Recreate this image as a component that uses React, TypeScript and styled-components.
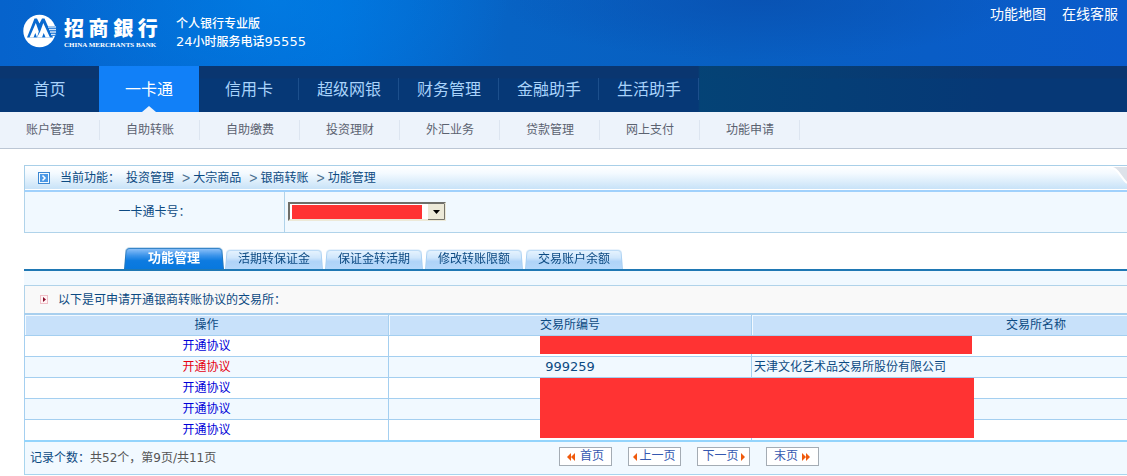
import React from "react";
import styled, { createGlobalStyle, css } from "styled-components";

const GlobalStyle = createGlobalStyle`
  *, *::before, *::after { box-sizing: border-box; }
  body {
    margin: 0;
    background: #fff;
    color: #0c4a82;
    font-family: "DejaVu Sans", "Noto Sans CJK SC", sans-serif;
    font-size: 12px;
    line-height: 20px;
  }
  a { color: inherit; text-decoration: none; }
  ul, ol { list-style: none; margin: 0; padding: 0; }
  button { font: inherit; color: inherit; cursor: pointer; }
`;

const Header = styled.header`
  display: flex;
  justify-content: space-between;
  align-items: flex-start;
  height: 66px;
  padding: 0 9px 0 23px;
  color: #fff;
  background:
    radial-gradient(ellipse 240px 130px at 270px 0, rgba(0, 134, 236, 0.5), rgba(0, 134, 236, 0)),
    radial-gradient(ellipse 260px 60px at 760px 0, rgba(9, 80, 176, 0.8), rgba(9, 80, 176, 0)),
    linear-gradient(90deg, #0663cc 0, #006fd9 30%, #0763c4 45%, #085fc1 65%, #0a5bcb 100%);
`;

const Brand = styled.div`
  display: flex;
  align-items: flex-start;
  padding-top: 14px;
`;

const BankName = styled.div`
  display: flex;
  flex-direction: column;
  width: 96px;
  margin: 3px 0 0 7px;
`;

const BankNameCn = styled.strong`
  font: 900 20px/22px "Noto Sans CJK TC", "Noto Sans CJK SC", sans-serif;
  white-space: nowrap;
`;

const BankNameEn = styled.span`
  margin-top: 2px;
  font: bold 7px/8px "Liberation Serif", serif;
  white-space: nowrap;
`;

const Slogan = styled.div`
  margin: 1px 0 0 16px;
  font-weight: 500;
  line-height: 18px;
`;

const Digits = styled.span`
  font-size: 13px;
`;

const TopLinks = styled.nav`
  display: flex;
  gap: 16px;
  padding-top: 4px;
  font-size: 14px;
`;

const MainNav = styled.nav`
  height: 46px;
  background:
    linear-gradient(90deg, rgba(4, 68, 118, 0) 698px, rgba(4, 68, 118, 0.9) 700px, rgba(4, 68, 118, 0) 1000px),
    linear-gradient(#0a3670 0, #0a3670 12px, #063876 13px, #063876 100%);
`;

const NavList = styled.ul`
  display: flex;
  height: 100%;
`;

const NavItem = styled.li<{ $active?: boolean; $plain?: boolean }>`
  position: relative;
  display: flex;
  align-items: center;
  justify-content: center;
  width: 100px;
  padding-top: 2px;
  color: #a9d3fb;
  font-size: 16px;
  &:first-child { width: 99px; }
  &::after {
    content: "";
    position: absolute;
    right: 0;
    top: 12px;
    width: 1px;
    height: 22px;
    background: ${(p) => (p.$plain ? "transparent" : "#1c4f8c")};
  }
  ${(p) =>
    p.$active &&
    css`
      color: #fff;
      background: #1180f8;
      &::after {
        right: 43px;
        top: 40px;
        width: 14px;
        height: 6px;
        background: #edf3fc;
        clip-path: polygon(50% 0, 100% 100%, 0 100%);
      }
    `}
`;

const SubNav = styled.nav`
  height: 37px;
  background: #edf3fb;
  border-bottom: 1px solid #bcc6d4;
`;

const SubItem = styled.li`
  position: relative;
  width: 100px;
  padding-top: 8px;
  color: #5b6270;
  text-align: center;
  &::after {
    content: "";
    position: absolute;
    right: 0;
    top: 8px;
    width: 1px;
    height: 20px;
    background: #dde5f0;
  }
`;

const Content = styled.main`
  padding: 16px 0 0 24px;
`;

const Crumbs = styled.nav`
  display: flex;
  align-items: center;
  justify-content: space-between;
  height: 27px;
  border: solid #a8cfe8;
  border-width: 1px 0 2px 1px;
  border-bottom-color: #a0d1fc;
  background: linear-gradient(#fff 0, #f4faff 30%, #c9e3f8 94%, #fff 96%);
`;

const CrumbList = styled.ol`
  display: flex;
  align-items: center;
  padding-left: 13px;
`;

const CrumbLabel = styled.li`
  margin: 0 6px 0 10px;
`;

const Crumb = styled.li`
  display: flex;
  & + &::before {
    content: ">";
    margin: 0 3px 0 8px;
    font-family: "Liberation Sans", sans-serif;
    font-size: 14px;
    color: #4c7090;
  }
`;

const CardForm = styled.form`
  display: flex;
  height: 41px;
  border: solid #b0d3ea;
  border-width: 0 0 1px 1px;
  background: #f1f9ff;
`;

const CardLabel = styled.label`
  display: flex;
  align-items: center;
  justify-content: center;
  width: 260px;
  border-right: 1px solid #b0d3ea;
`;

const CardField = styled.div`
  position: relative;
  width: 158px;
  height: 19px;
  margin: 10px 0 0 3px;
`;

const CardSelect = styled.select`
  appearance: none;
  display: block;
  width: 100%;
  height: 100%;
  padding: 0 20px 0 4px;
  border: 2px solid;
  border-color: #6f6f6a #ece9d8 #ece9d8 #6f6f6a;
  border-radius: 0;
  background: #fff;
`;

const SelectArrow = styled.svg`
  position: absolute;
  right: 1px;
  top: 2px;
  pointer-events: none;
`;

const Mask = styled.span<{ $x: number; $y: number; $w: number; $h: number }>`
  position: absolute;
  left: ${(p) => p.$x}px;
  top: ${(p) => p.$y}px;
  width: ${(p) => p.$w}px;
  height: ${(p) => p.$h}px;
  background: #ff3333;
  pointer-events: none;
`;

const Tabs = styled.div`
  display: flex;
  align-items: flex-end;
  height: 38px;
  padding-left: 100px;
  border-bottom: 2px solid #1f78b4;
`;

const Tab = styled.button<{ $active?: boolean }>`
  position: relative;
  z-index: 0;
  width: 100px;
  height: ${(p) => (p.$active ? 22 : 20)}px;
  padding: 0;
  border: 0;
  background: none;
  color: ${(p) => (p.$active ? "#fff" : "#0c4a82")};
  font-size: ${(p) => (p.$active ? 13 : 12)}px;
  font-weight: ${(p) => (p.$active ? 700 : 400)};
  line-height: ${(p) => (p.$active ? 22 : 18)}px;
  &::before {
    content: "";
    position: absolute;
    z-index: -1;
    inset: ${(p) => (p.$active ? "0" : "0 1px")};
    border: 1px solid ${(p) => (p.$active ? "#2478bd" : "#a9d0f2")};
    border-bottom: 0;
    border-radius: 4px 4px 0 0;
    background: ${(p) =>
      p.$active
        ? "linear-gradient(#8cc0f8 0, #3a93ea 35%, #0d7be0 60%, #0878de 100%)"
        : "linear-gradient(#e6f3fe 0, #cfe6fc 40%, #afd3f8 60%, #b5d8fb 100%)"};
    transform: perspective(40px) rotateX(4deg);
    transform-origin: bottom;
  }
`;

const Panel = styled.div`
  padding-top: 14px;
  background: #f1f9ff;
`;

const Notice = styled.h2`
  display: flex;
  align-items: center;
  gap: 10px;
  height: 28px;
  margin: 0;
  padding-left: 15px;
  border: solid #b0d3ea;
  border-width: 1px 0 0 1px;
  background: #f9f9f9;
  font-size: 12px;
  font-weight: 400;
`;

const TableArea = styled.div`
  position: relative;
`;

const Table = styled.table`
  width: 100%;
  table-layout: fixed;
  border-collapse: separate;
  border-spacing: 0;
  border-top: 2px solid #a8cfee;
  border-bottom: 2px solid #93d4fc;
`;

const Th = styled.th<{ $width?: number; $offset?: number }>`
  width: ${(p) => (p.$width ? `${p.$width}px` : "auto")};
  height: 20px;
  padding: 0 0 0 ${(p) => p.$offset ?? 0}px;
  border-left: 1px solid #a8d0f0;
  background: #c8e1fa;
  box-shadow: inset 1px 1px 0 #f2f9ff;
  font-weight: 400;
  line-height: 20px;
`;

const Row = styled.tr`
  background: #fff;
  &:nth-child(even) { background: #f1f9ff; }
`;

const Td = styled.td<{ $align?: string }>`
  height: 21px;
  padding: 0 2px;
  border: solid #a4cff0;
  border-width: 1px 0 0 1px;
  text-align: ${(p) => p.$align ?? "center"};
  line-height: 20px;
`;

const ActionLink = styled.a<{ $hot?: boolean }>`
  color: ${(p) => (p.$hot ? "#e60012" : "#0000d8")};
`;

const Footer = styled.footer`
  display: flex;
  align-items: flex-start;
  height: 33px;
  border: solid #a8d5ee;
  border-width: 0 0 1px 1px;
  background: #f1f9ff;
`;

const Count = styled.p`
  width: 534px;
  margin: 0;
  padding: 6px 0 0 5px;
`;

const CountValue = styled.span`
  color: #555;
`;

const Pager = styled.nav`
  display: flex;
  gap: 16px;
  padding-top: 5px;
`;

const PageButton = styled.button`
  display: flex;
  align-items: center;
  justify-content: center;
  gap: 4px;
  width: 53px;
  height: 19px;
  padding: 0;
  border: 1px solid #a4acb4;
  background: #fff;
  color: #3558b0;
  line-height: 17px;
  white-space: nowrap;
`;

const TightPageButton = styled(PageButton)`
  gap: 2px;
`;

function BankLogo() {
  return (
    <svg width="34" height="34" viewBox="0 0 34 34" aria-hidden="true">
      <circle cx="16.500" cy="17" r="16.200" fill="#fff" />
      <path d="M4 23.500 L11.500 4.500 H14 L16.500 9.500 L19 4.500 H21.500 L30 23.500 Z" fill="#0a6ad0" />
      <path d="M6.500 23.500 L12.800 9 L15.800 17.500 L14 23.500 L12.300 19 L10.500 23.500 Z" fill="#fff" />
      <path d="M17.200 17.500 L20.300 9 L27 23.500 H22.600 L20.700 19 L19 23.500 H14 Z" fill="#fff" />
      <path d="M24.500 12 H34 V22 H28.500 Z" fill="#0a6ad0" />
      <path d="M25 13 H33 M26 15.500 H33 M27 18 H33 M28 20.500 H32.500" stroke="#cfe4fa" strokeWidth="1.300" />
    </svg>
  );
}

function CrumbIcon() {
  return (
    <svg width="12" height="12" viewBox="0 0 12 12" aria-hidden="true">
      <rect x=".5" y=".5" width="11" height="11" fill="#f2f9ff" stroke="#3c87d2" />
      <rect x="2" y="2" width="8" height="8" fill="#4a98e6" />
      <path d="M4.500 3.500 L7 6 L4.500 8.500" fill="none" stroke="#fff" strokeWidth="1.500" />
    </svg>
  );
}

function CrumbCorner() {
  return (
    <svg width="20" height="24" viewBox="0 0 20 24" aria-hidden="true">
      <path d="M3 1 H20 V17 C14 10 12 4 3 1 Z" fill="#dde2e9" />
      <path d="M0 1 C12 1 12 10 20 17" fill="none" stroke="#fff" strokeWidth="2" />
    </svg>
  );
}

function NoticeIcon() {
  return (
    <svg width="8" height="9" viewBox="0 0 8 9" aria-hidden="true">
      <rect x=".5" y=".5" width="7" height="8" fill="#fff4f6" stroke="#f0c0c8" />
      <path d="M3 2 L6 4.500 L3 7 Z" fill="#8a0f2c" />
    </svg>
  );
}

function Arrow({ dir, double }: { dir: "left" | "right"; double?: boolean }) {
  const w = double ? 9 : 4;
  const tri = (x: number) =>
    dir === "left" ? `M${x + 4} 0 V8 L${x} 4 Z` : `M${x} 0 V8 L${x + 4} 4 Z`;
  return (
    <svg width={w} height="8" viewBox={`0 0 ${w} 8`} aria-hidden="true">
      <path d={double ? tri(0) + tri(4) : tri(0)} fill="#f05a0c" />
    </svg>
  );
}

const mainItems = ["首页", "一卡通", "信用卡", "超级网银", "财务管理", "金融助手", "生活助手"];
const subItems = ["账户管理", "自助转账", "自助缴费", "投资理财", "外汇业务", "贷款管理", "网上支付", "功能申请"];
const crumbs = ["投资管理", "大宗商品", "银商转账", "功能管理"];
const tabs = ["功能管理", "活期转保证金", "保证金转活期", "修改转账限额", "交易账户余额"];
const rows = [
  { code: "", name: "" },
  { code: "999259", name: "天津文化艺术品交易所股份有限公司", hot: true },
  { code: "", name: "" },
  { code: "", name: "" },
  { code: "", name: "" },
];

export default function App() {
  return (
    <>
      <GlobalStyle />
      <Header>
        <Brand>
          <BankLogo />
          <BankName>
            <BankNameCn>招 商 銀 行</BankNameCn>
            <BankNameEn>CHINA MERCHANTS BANK</BankNameEn>
          </BankName>
          <Slogan>
            个人银行专业版
            <br />
            <Digits>24</Digits>小时服务电话<Digits>95555</Digits>
          </Slogan>
        </Brand>
        <TopLinks>
          <a href="#map">功能地图</a>
          <a href="#service">在线客服</a>
        </TopLinks>
      </Header>
      <MainNav>
        <NavList>
          {mainItems.map((item, i) => (
            <NavItem key={item} $active={i === 1} $plain={i === 0}>
              <a href="#nav">{item}</a>
            </NavItem>
          ))}
        </NavList>
      </MainNav>
      <SubNav>
        <NavList>
          {subItems.map((item) => (
            <SubItem key={item}>
              <a href="#sub">{item}</a>
            </SubItem>
          ))}
        </NavList>
      </SubNav>
      <Content>
        <Crumbs>
          <CrumbList>
            <CrumbIcon />
            <CrumbLabel>当前功能：</CrumbLabel>
            {crumbs.map((c) => (
              <Crumb key={c}>
                <a href="#crumb">{c}</a>
              </Crumb>
            ))}
          </CrumbList>
          <CrumbCorner />
        </Crumbs>
        <CardForm>
          <CardLabel htmlFor="card">一卡通卡号：</CardLabel>
          <CardField>
            <CardSelect id="card">
              <option></option>
            </CardSelect>
            <Mask $x={4} $y={3} $w={130} $h={14} />
            <SelectArrow width="17" height="16" viewBox="0 0 17 16" aria-hidden="true">
              <rect width="17" height="16" fill="#ece9d8" />
              <path d="M0 15.500 H16.500 V0" fill="none" stroke="#76746a" />
              <path d="M5 6 H12 L8.500 10 Z" fill="#000" />
            </SelectArrow>
          </CardField>
        </CardForm>
        <Tabs role="tablist">
          {tabs.map((t, i) => (
            <Tab key={t} type="button" role="tab" aria-selected={i === 0} $active={i === 0}>
              {t}
            </Tab>
          ))}
        </Tabs>
        <Panel>
          <Notice>
            <NoticeIcon />
            以下是可申请开通银商转账协议的交易所：
          </Notice>
          <TableArea>
            <Table>
              <thead>
                <tr>
                  <Th $width={364}>操作</Th>
                  <Th $width={363}>交易所编号</Th>
                  <Th $offset={193}>交易所名称</Th>
                </tr>
              </thead>
              <tbody>
                {rows.map((r, i) => (
                  <Row key={i}>
                    <Td>
                      <ActionLink href="#open" $hot={r.hot}>
                        开通协议
                      </ActionLink>
                    </Td>
                    <Td>
                      <Digits>{r.code}</Digits>
                    </Td>
                    <Td $align="left">{r.name}</Td>
                  </Row>
                ))}
              </tbody>
            </Table>
            <Mask $x={516} $y={23} $w={432} $h={18} />
            <Mask $x={516} $y={65} $w={434} $h={60} />
          </TableArea>
          <Footer>
            <Count>
              记录个数：<CountValue>共52个，第9页/共11页</CountValue>
            </Count>
            <Pager>
              <PageButton type="button">
                <Arrow dir="left" double />
                首页
              </PageButton>
              <TightPageButton type="button">
                <Arrow dir="left" />
                上一页
              </TightPageButton>
              <TightPageButton type="button">
                下一页
                <Arrow dir="right" />
              </TightPageButton>
              <PageButton type="button">
                末页
                <Arrow dir="right" double />
              </PageButton>
            </Pager>
          </Footer>
        </Panel>
      </Content>
    </>
  );
}
